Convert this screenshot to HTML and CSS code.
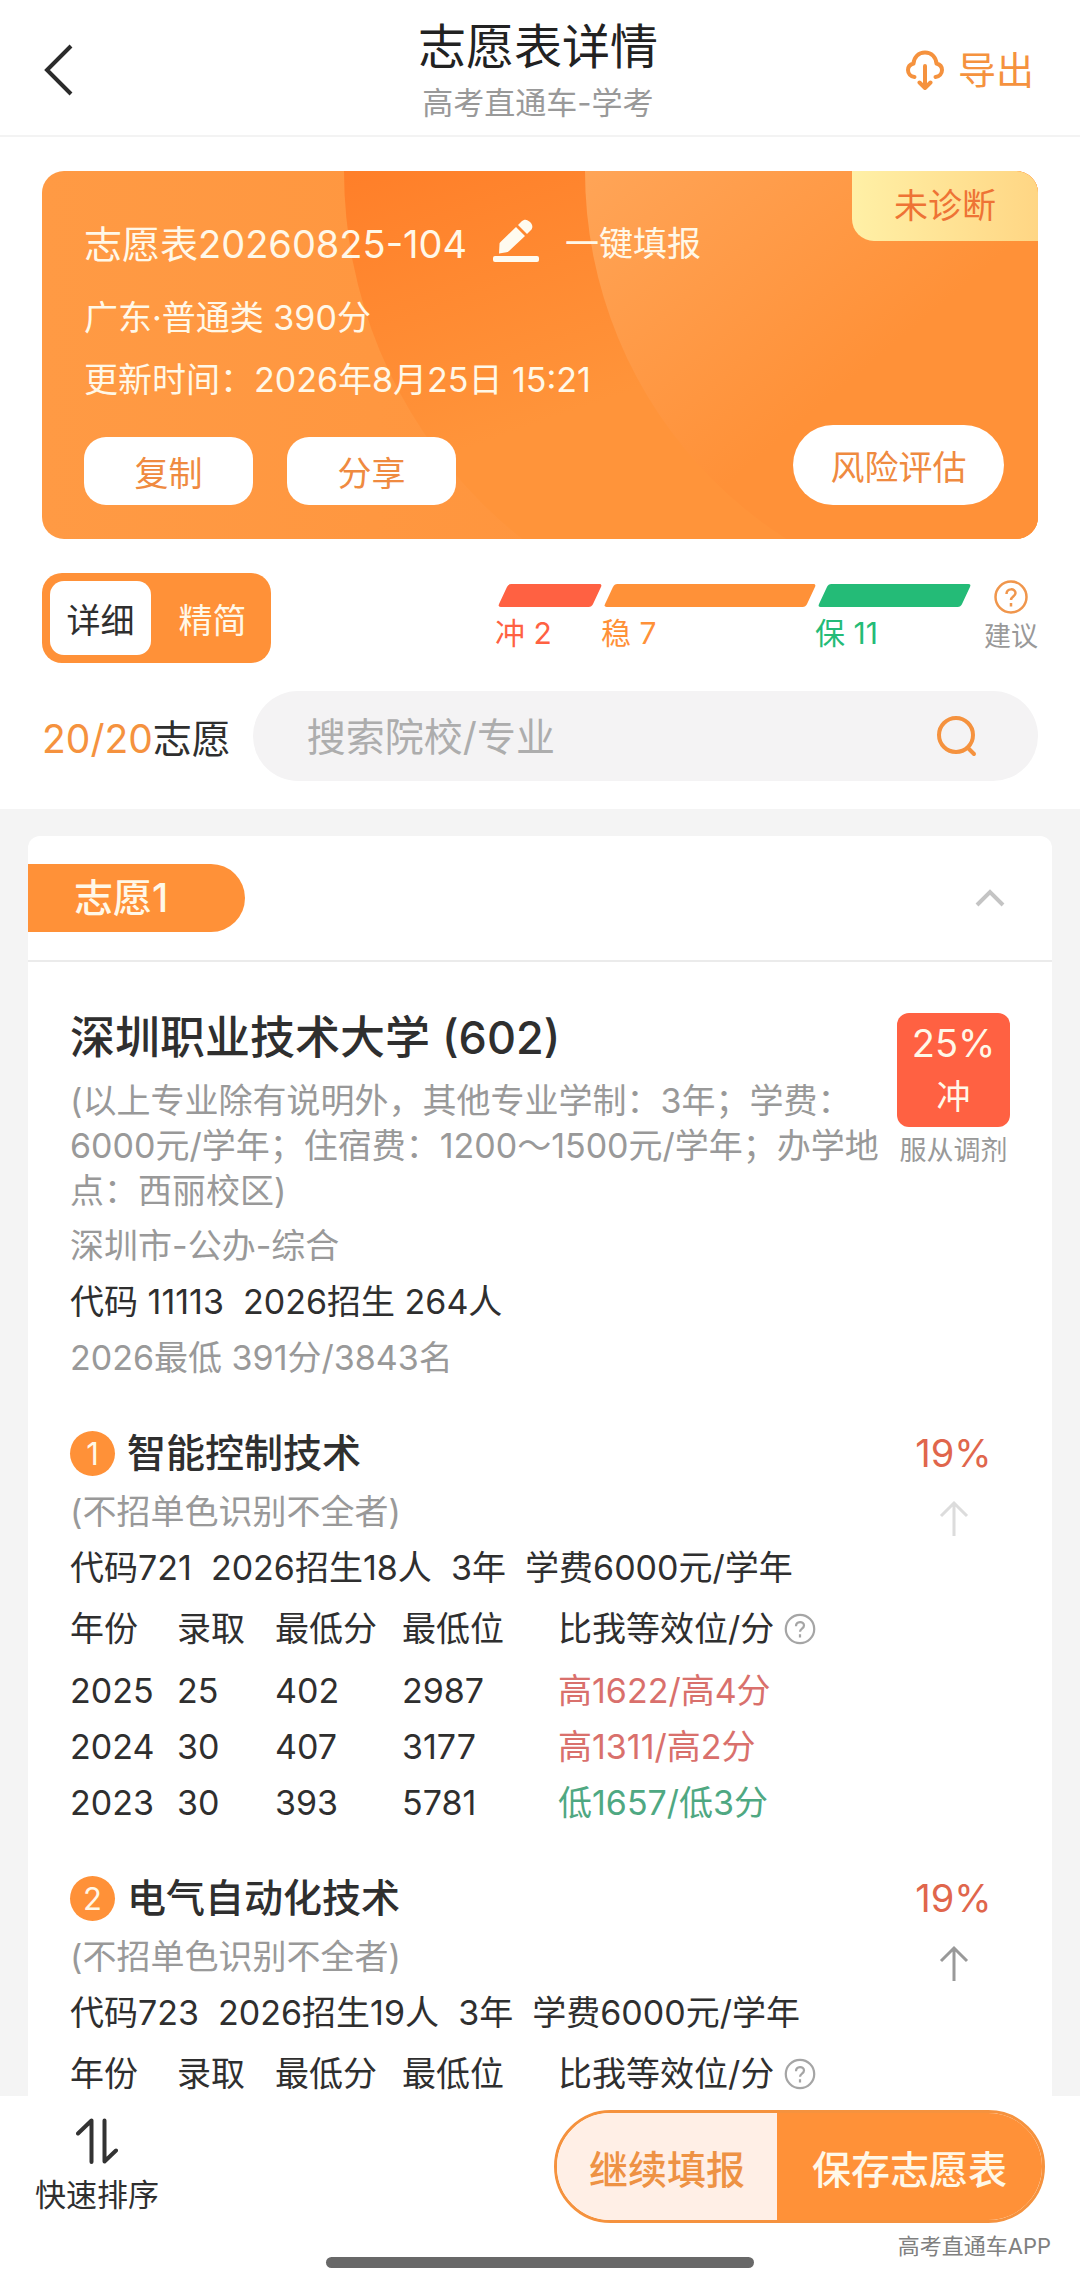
FILE: index.html
```html
<!DOCTYPE html>
<html lang="zh-CN">
<head>
  <meta charset="UTF-8">
  <meta name="viewport" content="width=device-width, initial-scale=1">
  <title>志愿表详情</title>
  <link rel="stylesheet" href="styles.css">
</head>
<body>
  <div class="app">
    <header class="topbar">
      <button class="back" aria-label="返回">
        <svg width="32" height="54" viewBox="0 0 32 54" fill="none" stroke="#2b2b2b" stroke-width="4"><path d="M29 3L5 27l24 24"/></svg>
      </button>
      <div class="topbar-title">
        <h1>志愿表详情</h1>
        <p>高考直通车-学考</p>
      </div>
      <button class="export">
        <svg width="38" height="40" viewBox="0 0 38 40" fill="none" stroke="#f5923e" stroke-width="4" stroke-linecap="round" stroke-linejoin="round"><path d="M8.500 27C4.500 26.500 2 23.500 2 20c0-3 2-5.500 5.500-6.500C8 7 12.500 2.500 19 2.500S30 7 30.500 13.500C34 14.500 36 17 36 20c0 3.500-2.500 6.500-6.500 7"/><path d="M19 16v22M13.500 32.500L19 38l5.500-5.500"/></svg>
        导出
      </button>
    </header>

    <section class="summary">
      <div class="card">
        <svg class="card-bg" viewBox="0 0 996 368" preserveAspectRatio="xMidYMid slice" aria-hidden="true">
          <defs>
            <linearGradient id="g1" x1="0" y1="0" x2="0.35" y2="1">
              <stop offset="0.45" stop-color="#ff7f29"/>
              <stop offset="0.75" stop-color="#ff943a"/>
            </linearGradient>
            <linearGradient id="g2" x1="0.1" y1="0.3" x2="0.6" y2="0.9">
              <stop offset="0.1" stop-color="#ffa558"/>
              <stop offset="0.6" stop-color="#ff9138"/>
            </linearGradient>
          </defs>
          <circle cx="771" cy="0" r="469" fill="url(#g1)"/>
          <circle cx="980" cy="0" r="437" fill="url(#g2)"/>
        </svg>
        <span class="ribbon">未诊断</span>
        <div class="card-title">
          <h2>志愿表20260825-104</h2>
          <button class="edit" aria-label="编辑名称">
            <svg width="46" height="44" viewBox="0 0 46 44" fill="#fffbf0"><rect x="0" y="37" width="46" height="6" rx="2"/><path d="M6 34.500L6.500 25c0-1 0.500-1.500 1-2L23 8l9 9-16 15c-1 1-1.500 1-2.500 1.200z"/><path d="M25 6l3.500-3.500c3-3 6-2 8.500 0.500s3.500 5.500 0.500 8.500L34 15z"/></svg>
          </button>
          <span>一键填报</span>
        </div>
        <p>广东·普通类 390分</p>
        <p>更新时间：2026年8月25日 15:21</p>
        <div class="card-actions">
          <button class="pill">复制</button>
          <button class="pill">分享</button>
          <button class="pill pill-risk">风险评估</button>
        </div>
      </div>

      <div class="modes">
        <div class="toggle">
          <button class="active">详细</button>
          <button>精简</button>
        </div>
        <div class="levels">
          <div class="level red"><i></i>冲 2</div>
          <div class="level orange"><i></i>稳 7</div>
          <div class="level green"><i></i>保 11</div>
        </div>
        <button class="advice">
          <svg width="36" height="36" viewBox="0 0 36 36" fill="none" stroke="#f0964c" stroke-width="2.500"><circle cx="18" cy="18" r="15.500"/><path d="M13.500 15c0-6 9-6 9-1 0 3.500-4.500 3.500-4.500 7M18 24v3.500"/></svg>
          建议
        </button>
      </div>

      <div class="search-row">
        <label for="search"><b>20/20</b>志愿</label>
        <div class="search">
          <input type="text" id="search" placeholder="搜索院校/专业">
          <button aria-label="搜索">
            <svg width="42" height="42" viewBox="0 0 42 42" fill="none" stroke="#f5923e" stroke-width="4" stroke-linecap="round"><circle cx="20" cy="20" r="17"/><path d="M32 33l6 6"/></svg>
          </button>
        </div>
      </div>
    </section>

    <main class="list">
      <article class="wish">
        <div class="wish-head">
          <span class="wish-no">志愿1</span>
          <button class="fold" aria-label="收起">
            <svg width="32" height="20" viewBox="0 0 32 20" fill="none" stroke="#c4c4c4" stroke-width="4"><path d="M3 17L16 4l13 13"/></svg>
          </button>
        </div>

        <div class="wish-body">
          <div class="row">
            <div class="school">
              <h2>深圳职业技术大学 (602)</h2>
              <p class="note">(以上专业除有说明外，其他专业学制：3年；学费：6000元/学年；住宿费：1200～1500元/学年；办学地点：西丽校区)</p>
              <p class="gray">深圳市-公办-综合</p>
              <p>代码 11113&nbsp; 2026招生 264人</p>
              <p class="gray">2026最低 391分/3843名</p>
            </div>
            <div class="side">
              <div class="chance">25%<span>冲</span></div>
              <small>服从调剂</small>
            </div>
          </div>

          <div class="row">
            <section class="major">
              <h3><span class="num">1</span>智能控制技术</h3>
              <p class="gray">(不招单色识别不全者)</p>
              <p>代码721&nbsp; 2026招生18人&nbsp; 3年&nbsp; 学费6000元/学年</p>
              <table>
                <thead>
                  <tr>
                    <th class="c1">年份</th><th class="c2">录取</th><th class="c3">最低分</th><th class="c4">最低位</th>
                    <th><span class="th-help">比我等效位/分
                      <button aria-label="说明"><svg width="32" height="32" viewBox="0 0 36 36" fill="none" stroke="#a5a5a5" stroke-width="2.500"><circle cx="18" cy="18" r="16"/><path d="M13.500 15c0-6 9-6 9-1 0 3.500-4.500 3.500-4.500 7M18 24v3.500"/></svg></button></span></th>
                  </tr>
                </thead>
                <tbody>
                  <tr><td>2025</td><td>25</td><td>402</td><td>2987</td><td class="high">高1622/高4分</td></tr>
                  <tr><td>2024</td><td>30</td><td>407</td><td>3177</td><td class="high">高1311/高2分</td></tr>
                  <tr><td>2023</td><td>30</td><td>393</td><td>5781</td><td class="low">低1657/低3分</td></tr>
                </tbody>
              </table>
            </section>
            <div class="side">
              <span class="rate">19%</span>
              <button class="move" aria-label="上移" disabled>
                <svg width="30" height="36" viewBox="0 0 30 36" fill="none" stroke="currentColor" stroke-width="3"><path d="M15 36V3M2 16L15 3l13 13"/></svg>
              </button>
            </div>
          </div>

          <div class="row">
            <section class="major">
              <h3><span class="num">2</span>电气自动化技术</h3>
              <p class="gray">(不招单色识别不全者)</p>
              <p>代码723&nbsp; 2026招生19人&nbsp; 3年&nbsp; 学费6000元/学年</p>
              <table>
                <thead>
                  <tr>
                    <th class="c1">年份</th><th class="c2">录取</th><th class="c3">最低分</th><th class="c4">最低位</th>
                    <th><span class="th-help">比我等效位/分
                      <button aria-label="说明"><svg width="32" height="32" viewBox="0 0 36 36" fill="none" stroke="#a5a5a5" stroke-width="2.500"><circle cx="18" cy="18" r="16"/><path d="M13.500 15c0-6 9-6 9-1 0 3.500-4.500 3.500-4.500 7M18 24v3.500"/></svg></button></span></th>
                  </tr>
                </thead>
              </table>
            </section>
            <div class="side">
              <span class="rate">19%</span>
              <button class="move" aria-label="上移">
                <svg width="30" height="36" viewBox="0 0 30 36" fill="none" stroke="currentColor" stroke-width="3"><path d="M15 36V3M2 16L15 3l13 13"/></svg>
              </button>
            </div>
          </div>
        </div>
      </article>
    </main>

    <footer class="bottom">
      <div class="bottom-row">
        <button class="sort">
          <svg width="42" height="46" viewBox="0 0 42 46" fill="none" stroke="#333" stroke-width="4" stroke-linecap="round" stroke-linejoin="round"><path d="M2 15.500L15.500 2.500V44M28.500 2.500V43.500L40 32.500"/></svg>
          快速排序
        </button>
        <div class="actions">
          <button class="continue">继续填报</button>
          <button class="save">保存志愿表</button>
        </div>
      </div>
      <p class="brand">高考直通车APP</p>
      <div class="home-bar"></div>
    </footer>
  </div>
</body>
</html>
```
FILE: styles.css
```css
* {
  box-sizing: border-box;
}

body {
  margin: 0;
  font-family: Inter, "Noto Sans CJK SC", sans-serif;
  font-size: 34px;
  color: #2f2f2f;
  background: #fff;
}

h1, h2, h3, p {
  margin: 0;
  font-weight: 400;
}

button {
  padding: 0;
  border: none;
  background: none;
  font: inherit;
  color: inherit;
  cursor: pointer;
}

svg {
  display: block;
  flex: none;
}

.app {
  display: flex;
  flex-direction: column;
  min-height: 100vh;
}

/* header */
.topbar {
  display: grid;
  grid-template-columns: 1fr auto 1fr;
  align-items: center;
  padding: 14px 46px 9px 42px;
  border-bottom: 2px solid #f3f3f3;
}

.back {
  justify-self: start;
}

.topbar-title {
  text-align: center;
}

.topbar-title h1 {
  font-size: 48px;
  line-height: 66px;
  color: #222;
}

.topbar-title p {
  font-size: 31px;
  line-height: 46px;
  color: #999;
}

.export {
  display: flex;
  align-items: center;
  justify-self: end;
  gap: 14px;
  font-size: 38px;
  line-height: 50px;
  color: #f5923e;
}

/* summary */
.summary {
  padding: 34px 42px 28px;
}

.card {
  position: relative;
  overflow: hidden;
  padding: 38px 34px 34px 42px;
  border-radius: 22px;
  background: linear-gradient(to right, #ff9a44, #ff9138);
  color: #fff8e8;
}

.card > * {
  position: relative;
}

.card .card-bg {
  position: absolute;
  inset: 0;
  width: 100%;
  height: 100%;
}

.card .ribbon {
  position: absolute;
  top: 0;
  right: 0;
  width: 186px;
  line-height: 70px;
  border-bottom-left-radius: 22px;
  background: linear-gradient(to right, #fff0a6, #ffd684);
  color: #ee7335;
  text-align: center;
}

.card-title {
  display: flex;
  align-items: center;
  height: 64px;
  margin-bottom: 14px;
}

.card-title h2 {
  font-size: 38px;
}

.edit {
  margin: 0 26px 0 26px;
}

.card p {
  line-height: 62px;
}

.card-actions {
  display: flex;
  align-items: flex-end;
  gap: 34px;
  margin-top: 14px;
}

.pill {
  width: 169px;
  height: 68px;
  border-radius: 22px;
  background: #fff;
  color: #ef8a40;
}

.pill-risk {
  width: 211px;
  height: 80px;
  margin-left: auto;
  border-radius: 40px;
}

.modes {
  display: flex;
  align-items: flex-start;
  margin-top: 34px;
}

.toggle {
  display: flex;
  gap: 11px;
  padding: 8px;
  border-radius: 20px;
  background: #ff9138;
  color: #fff8e8;
}

.toggle button {
  width: 101px;
  height: 74px;
  border-radius: 14px;
}

.toggle .active {
  background: #fff;
  color: #2f2f2f;
}

.levels {
  display: grid;
  grid-template-columns: 106px 214px 155px;
  margin: 11px 14px 0 auto;
}

.level {
  font-size: 30px;
  line-height: 52px;
}

.level i {
  display: block;
  height: 23px;
  margin: 0 4px 0 8px;
  border-radius: 3px;
  background: currentColor;
  transform: skewX(-25deg);
}

.red { color: #ff6142; }
.orange { color: #ff9138; }
.green { color: #24bb77; }

.advice {
  display: flex;
  flex-direction: column;
  align-items: center;
  margin-top: 6px;
  font-size: 27px;
  line-height: 44px;
  color: #999;
}

.search-row {
  display: flex;
  align-items: center;
  gap: 22px;
  margin-top: 28px;
  font-size: 39px;
}

.search-row b {
  font-weight: 400;
  color: #f5923e;
}

.search {
  display: flex;
  flex: 1;
  align-items: center;
  height: 90px;
  padding: 0 60px 0 54px;
  border-radius: 45px;
  background: #f4f3f4;
}

.search input {
  flex: 1;
  min-width: 0;
  padding: 0;
  border: none;
  outline: none;
  background: none;
  font: inherit;
}

.search input::placeholder {
  color: #adadad;
}

/* list */
.list {
  flex: 1;
  padding: 27px 28px 0;
  background: #f4f4f4;
}

.wish {
  height: 100%;
  border-radius: 12px 12px 0 0;
  background: #fff;
}

.wish-head {
  display: flex;
  align-items: center;
  justify-content: space-between;
  padding: 28px 46px 28px 0;
  border-bottom: 2px solid #ebebeb;
}

.wish-no {
  width: 217px;
  padding-left: 46px;
  border-radius: 0 34px 34px 0;
  background: #ff9138;
  color: #fff8e8;
  font-size: 39px;
  font-weight: 500;
  line-height: 68px;
}

.wish-body {
  display: flex;
  flex-direction: column;
  gap: 44px;
  padding: 48px 42px 0;
}

.row {
  display: flex;
  justify-content: space-between;
}

.school, .major {
  flex: 1;
  line-height: 56px;
}

.school h2 {
  margin-bottom: 12px;
  font-size: 45px;
  font-weight: 500;
}

.note {
  margin-bottom: 5px;
  line-height: 45px;
  color: #999;
}

.gray {
  color: #999;
}

.side {
  display: flex;
  flex-direction: column;
  align-items: center;
  width: 113px;
}

.chance {
  width: 100%;
  margin-top: 3px;
  padding: 3px 0;
  border-radius: 12px;
  background: #ff6142;
  color: #fff8e8;
  font-size: 38px;
  line-height: 54px;
  text-align: center;
}

.chance span {
  display: block;
  font-size: 34px;
}

.side small {
  font-size: 27px;
  line-height: 48px;
  color: #999;
}

.major h3 {
  display: flex;
  align-items: center;
  gap: 12px;
  margin-bottom: 8px;
  font-size: 39px;
  font-weight: 500;
  line-height: 46px;
}

.num {
  width: 45px;
  height: 45px;
  border-radius: 50%;
  background: #ff9138;
  color: #fff8e8;
  font-size: 31px;
  font-weight: 400;
  line-height: 45px;
  text-align: center;
}

table {
  width: 100%;
  margin-top: 11px;
  border-collapse: collapse;
  table-layout: fixed;
  line-height: 44px;
}

th, td {
  height: 56px;
  padding: 0;
  font-weight: 400;
  text-align: left;
  white-space: nowrap;
}

th {
  height: 44px;
}

tbody tr:first-child td {
  height: 68px;
  padding-top: 12px;
}

.c1 { width: 107px; }
.c2 { width: 98px; }
.c3 { width: 127px; }
.c4 { width: 156px; }

.th-help {
  display: flex;
  align-items: center;
  gap: 10px;
}

.high { color: #d9706c; }
.low { color: #4fa882; }

.rate {
  color: #e0664c;
  font-size: 38px;
  line-height: 46px;
}

.move {
  margin-top: 24px;
  color: #999;
}

.move:disabled {
  color: #dcdcdc;
}

/* footer */
.bottom {
  padding: 14px 35px 16px;
  background: #fff;
}

.bottom-row {
  display: flex;
  justify-content: space-between;
}

.sort {
  display: flex;
  flex-direction: column;
  align-items: center;
  padding-top: 8px;
  font-size: 31px;
  line-height: 62px;
}

.actions {
  display: flex;
  overflow: hidden;
  width: 491px;
  height: 113px;
  border: 3px solid #f5923e;
  border-radius: 57px;
  font-size: 39px;
  font-weight: 500;
}

.continue {
  width: 220px;
  background: #ffefe6;
  color: #ee9244;
}

.save {
  flex: 1;
  background: #ff9138;
  color: #fff8e8;
}

.brand {
  margin: 9px -6px 0 0;
  font-size: 22px;
  line-height: 22px;
  color: #808080;
  text-align: right;
}

.home-bar {
  width: 428px;
  height: 11px;
  margin: 0 auto;
  border-radius: 6px;
  background: #686868;
}
```
